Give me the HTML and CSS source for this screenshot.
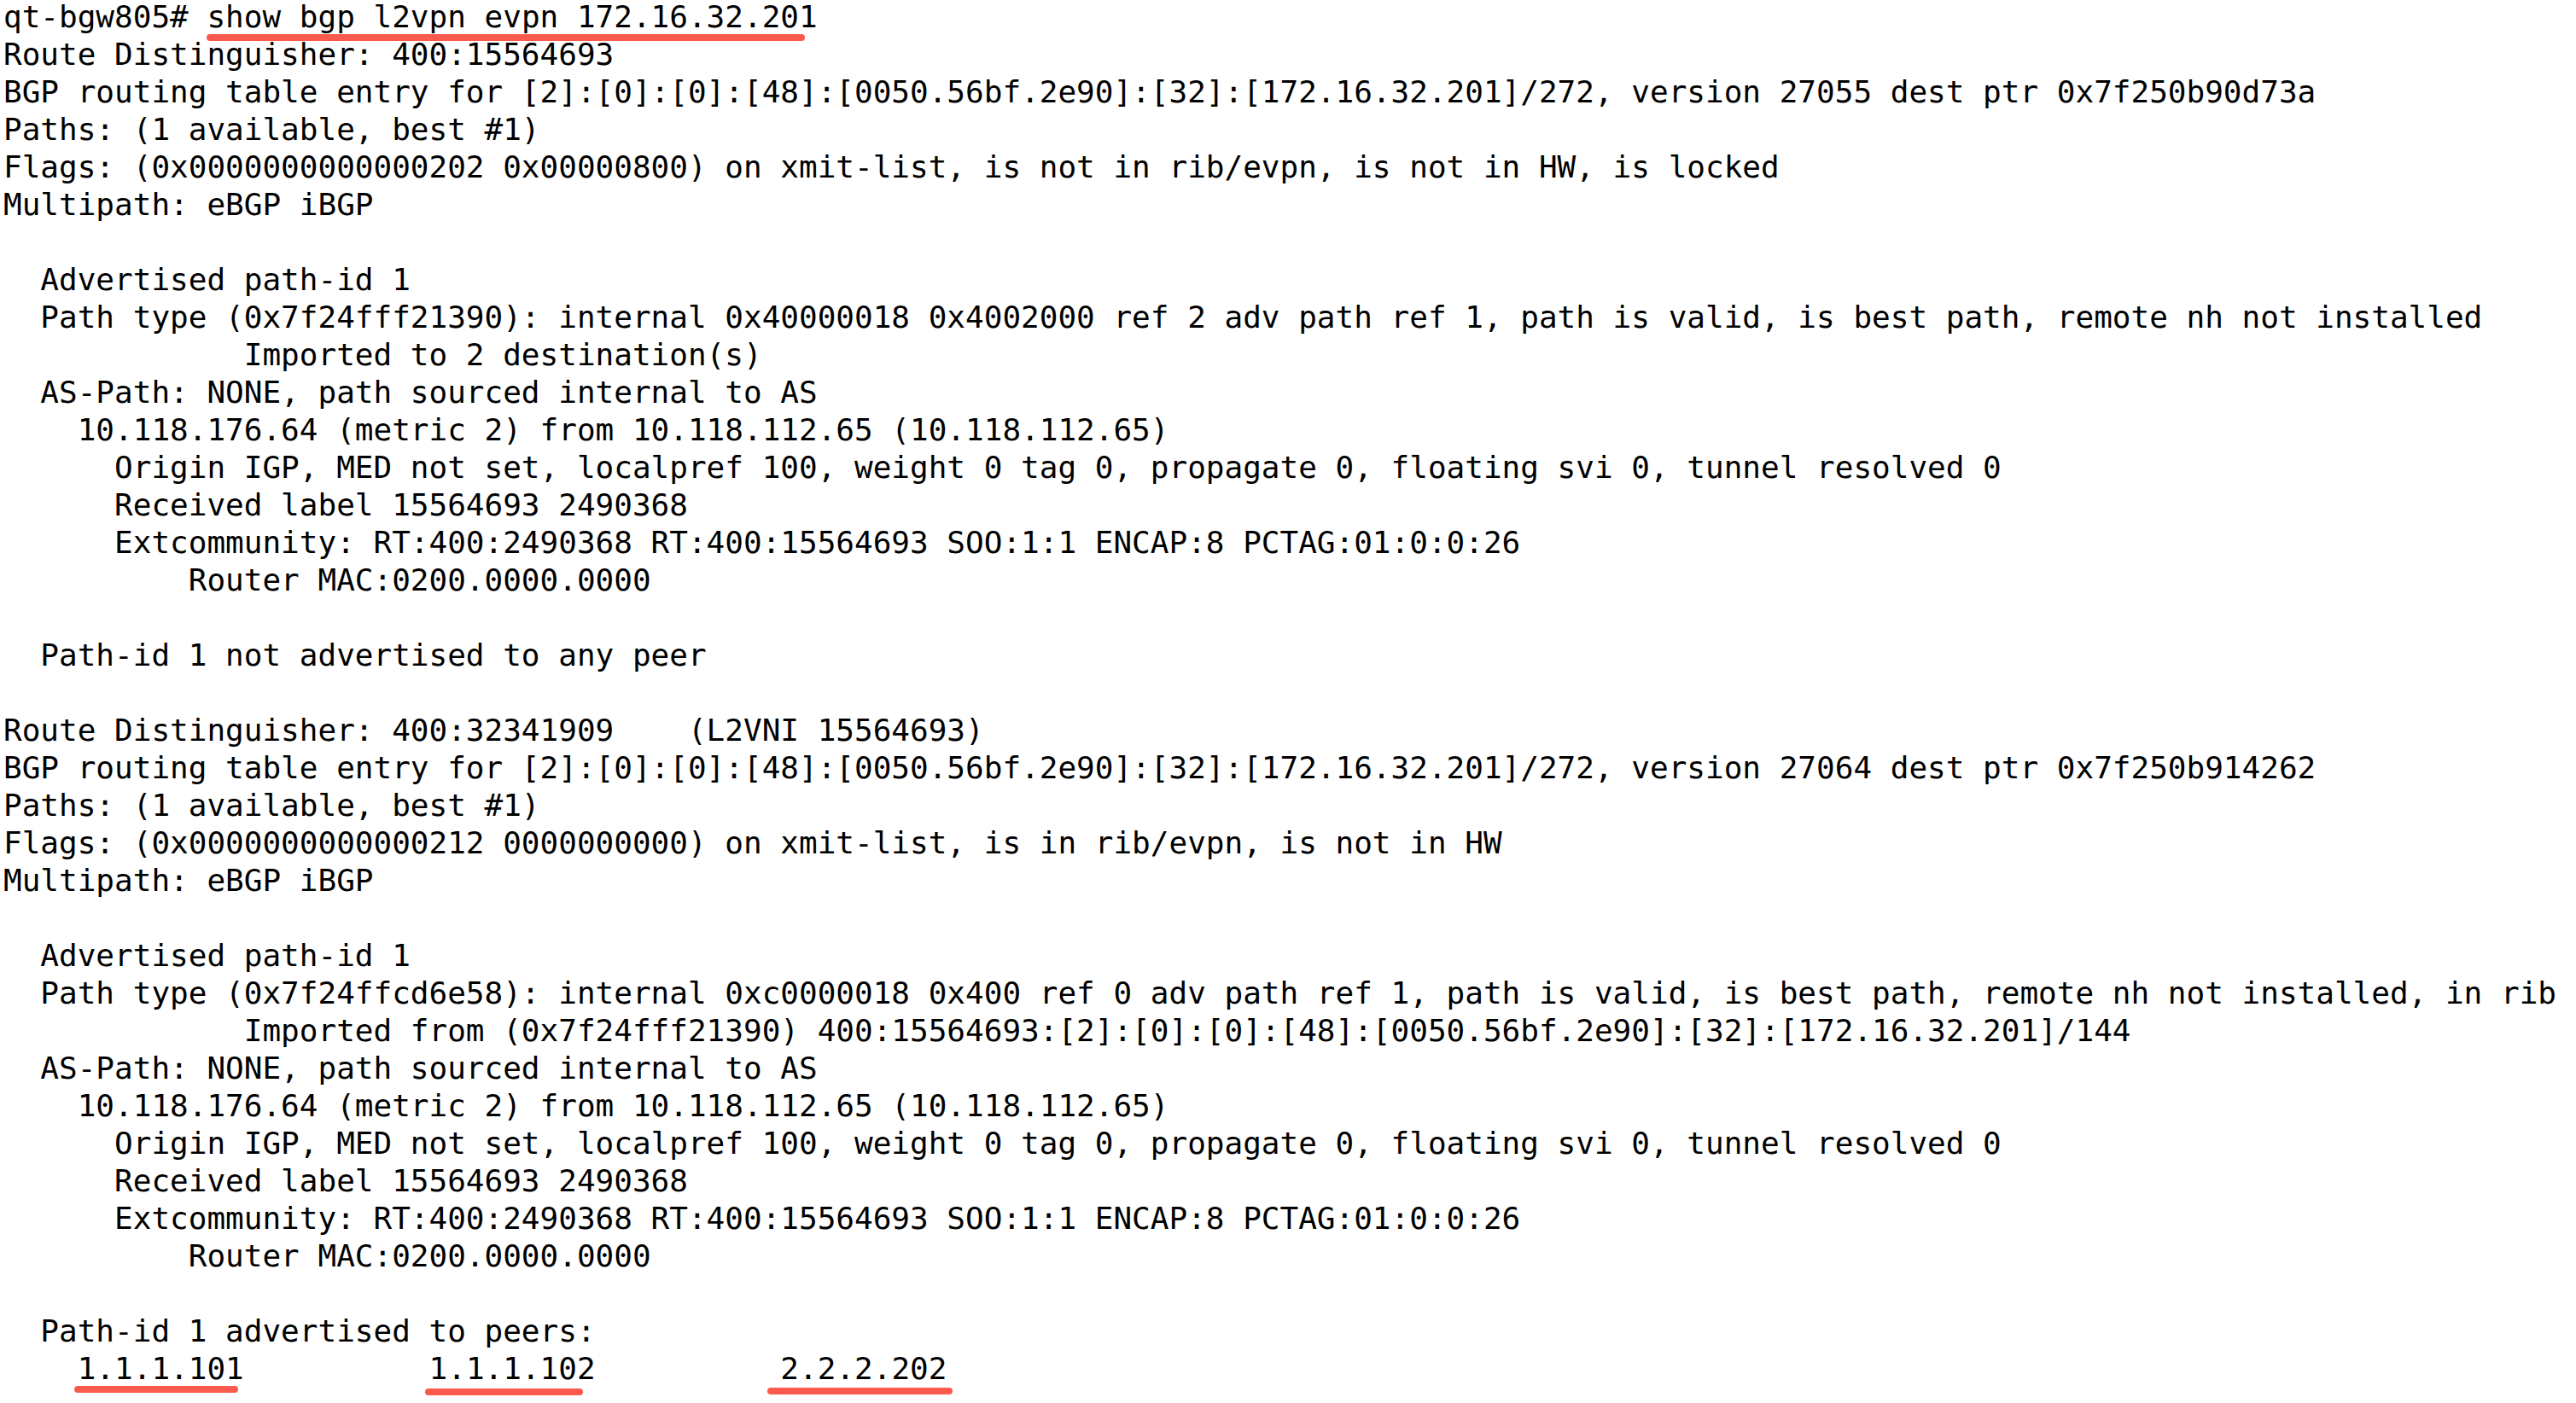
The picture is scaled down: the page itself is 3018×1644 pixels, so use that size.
FILE: index.html
```html
<!DOCTYPE html>
<html>
<head>
<meta charset="utf-8">
<link rel="stylesheet" href="styles.css">
</head>
<body>
<pre class="term">qt-bgw805# <span class="mark mark-cmd">show bgp l2vpn evpn 172.16.32.201</span>
Route Distinguisher: 400:15564693
BGP routing table entry for [2]:[0]:[0]:[48]:[0050.56bf.2e90]:[32]:[172.16.32.201]/272, version 27055 dest ptr 0x7f250b90d73a
Paths: (1 available, best #1)
Flags: (0x0000000000000202 0x00000800) on xmit-list, is not in rib/evpn, is not in HW, is locked
Multipath: eBGP iBGP

  Advertised path-id 1
  Path type (0x7f24fff21390): internal 0x40000018 0x4002000 ref 2 adv path ref 1, path is valid, is best path, remote nh not installed
             Imported to 2 destination(s)
  AS-Path: NONE, path sourced internal to AS
    10.118.176.64 (metric 2) from 10.118.112.65 (10.118.112.65)
      Origin IGP, MED not set, localpref 100, weight 0 tag 0, propagate 0, floating svi 0, tunnel resolved 0
      Received label 15564693 2490368
      Extcommunity: RT:400:2490368 RT:400:15564693 SOO:1:1 ENCAP:8 PCTAG:01:0:0:26
          Router MAC:0200.0000.0000

  Path-id 1 not advertised to any peer

Route Distinguisher: 400:32341909    (L2VNI 15564693)
BGP routing table entry for [2]:[0]:[0]:[48]:[0050.56bf.2e90]:[32]:[172.16.32.201]/272, version 27064 dest ptr 0x7f250b914262
Paths: (1 available, best #1)
Flags: (0x0000000000000212 0000000000) on xmit-list, is in rib/evpn, is not in HW
Multipath: eBGP iBGP

  Advertised path-id 1
  Path type (0x7f24ffcd6e58): internal 0xc0000018 0x400 ref 0 adv path ref 1, path is valid, is best path, remote nh not installed, in rib
             Imported from (0x7f24fff21390) 400:15564693:[2]:[0]:[0]:[48]:[0050.56bf.2e90]:[32]:[172.16.32.201]/144
  AS-Path: NONE, path sourced internal to AS
    10.118.176.64 (metric 2) from 10.118.112.65 (10.118.112.65)
      Origin IGP, MED not set, localpref 100, weight 0 tag 0, propagate 0, floating svi 0, tunnel resolved 0
      Received label 15564693 2490368
      Extcommunity: RT:400:2490368 RT:400:15564693 SOO:1:1 ENCAP:8 PCTAG:01:0:0:26
          Router MAC:0200.0000.0000

  Path-id 1 advertised to peers:
    <span class="mark mark-p1">1.1.1.101</span>          <span class="mark mark-p2">1.1.1.102</span>          <span class="mark mark-p3">2.2.2.202</span></pre>
</body>
</html>
```

FILE: styles.css
```css
html, body {
  margin: 0;
  padding: 0;
  background: #ffffff;
}

body {
  min-height: 1644px;
}

.term {
  margin: -2px 0 0 0;
  padding: 0 0 18px 4px;
  font-family: "DejaVu Sans Mono", "Liberation Mono", monospace;
  font-size: 36px;
  line-height: 44px;
  color: #000000;
  white-space: pre;
}

.mark {
  position: relative;
  display: inline-block;
  vertical-align: top;
  line-height: 44px;
  height: 44px;
}

.mark::after {
  content: "";
  position: absolute;
  height: 8px;
  border-radius: 4px;
  background: #fd5a4e;
}

.mark-cmd::after {
  left: 0;
  right: 15px;
  top: 42px;
}

.mark-p1::after {
  left: -4px;
  right: 7px;
  top: 42px;
}

.mark-p2::after {
  left: -5px;
  right: 15px;
  top: 45px;
}

.mark-p3::after {
  left: -15px;
  right: -7px;
  top: 44px;
}
```
